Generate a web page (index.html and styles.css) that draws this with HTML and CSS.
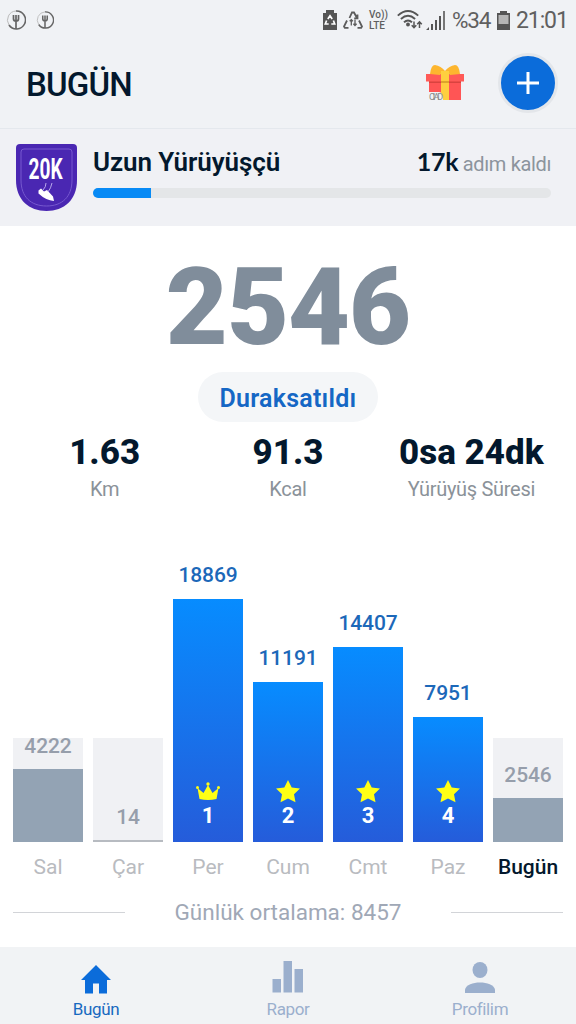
FILE: index.html
```html
<!DOCTYPE html>
<html lang="tr">
<head>
<meta charset="utf-8">
<title>Bugün</title>
<link rel="stylesheet" href="styles.css">
</head>

<body>
<div class="status">
  <div class="status-left">
    <svg width="20" height="20" viewBox="0 0 20 20" fill="none" stroke="#666"><path d="M10 1a9 9 0 1 1-7 14" stroke-width="1.6"/><path d="M3 15A9 9 0 0 1 10 1" stroke="#bbb" stroke-width="1"/><path d="M7.500 5v4q0 2 2.500 2t2.500-2V5M10 5v14" stroke-width="1.700"/></svg>
    <svg width="18" height="18" viewBox="0 0 20 20" fill="none" stroke="#666"><path d="M10 1a9 9 0 1 1-7 14" stroke-width="1.6"/><path d="M3 15A9 9 0 0 1 10 1" stroke="#bbb" stroke-width="1"/><path d="M7.500 5v4q0 2 2.500 2t2.500-2V5M10 5v14" stroke-width="1.700"/></svg>
  </div>
  <div class="status-right">
    <svg class="s-recycle" width="14" height="20" viewBox="0 0 14 20"><path d="M0 3h3V0h8v3h3v17H0z" fill="#555"/><path d="M4.800 9 7 5.800 9.200 9M10.400 10.500l1.300 3.500H8.300M5.700 14H2.300l1.300-3.500" fill="none" stroke="#fff" stroke-width="1.700"/></svg>
    <svg class="s-saver" width="20" height="18" viewBox="0 0 20 18" fill="none" stroke="#5c5c5c" stroke-width="1.800"><path d="M6.500 7 9 1.500h2L14 7M14.500 3.500v3.800h-3.300M16 9.500l3 6-.800 1.300H14.500M4 9.500l-3 6 .800 1.300H5.500"/><path d="M8.300 8.500v6M6.700 10.300 8.300 8.600l1.600 1.700M12 8.500v6m-1.600-1.700 1.600 1.700 1.600-1.700" stroke-width="1.300"/></svg>
    <div class="lte"><span>Vo))</span><span>LTE</span></div>
    <svg class="s-wifi" width="26" height="20" viewBox="0 0 26 20" fill="none" stroke="#555" stroke-width="1.900"><path d="M.8 5.600q10.200-9.200 20.400 0M3.900 9q7.100-6.300 14.200 0M7 12.300q4-3.600 8 0"/><circle cx="11" cy="14.500" r="1" fill="#555"/><path d="M17 11.500v6m-2.300-2.200L17 17.600l2.300-2.300M22.500 18v-6m-2.300 2.200 2.300-2.300 2.300 2.300" stroke-width="1.500"/></svg>
    <svg class="s-signal" width="19" height="19" viewBox="0 0 19 19" fill="#555"><path d="M0 19l3-3v3zM5 13h2v6H5zM9 9h2v10H9zM13 5h2v14h-2z"/><path d="M17 0h2v19h-2z" fill="#777"/></svg>
    <span class="percent">%34</span>
    <svg class="s-battery" width="13" height="19" viewBox="0 0 13 19"><path d="M0 2h3V0h7v2h3v17H0z" fill="#555"/><path d="M1.500 4h10v9h-10z" fill="#b5b5b5"/></svg>
    <span class="clock">21:01</span>
  </div>
</div>

<div class="header">
  <h1>BUGÜN</h1>
  <svg class="gift" width="38" height="38" viewBox="0 0 38 38">
    <path d="M3 17h32v19H3z" fill="#ff5555"/>
    <path d="M0 10h38v7.500H0z" fill="#ff5a57"/>
    <path d="M3 17.500h32v1.500H3z" fill="#d9433f"/>
    <path d="M4 10Q5 1 9 1q6 1 10 6 4-5 10-6 4 0 5 9l-10 1-2-3h-6l-2 3z" fill="#fdb62f"/>
    <path d="M15 7h8v29h-8z" fill="#ffcf3f"/>
    <path d="M15 17h8v2h-8z" fill="#dda52c"/>
    <path d="M1 28h12q4 0 4 9H1z" fill="#f0f2f5"/>
    <text class="gift-text" x="3" y="36">CIAD</text>
  </svg>
  <div class="add"><svg width="24" height="24" viewBox="0 0 24 24"><path d="M12 1v22M1 12h22" stroke="#fff" stroke-width="3"/></svg></div>
</div>

<div class="goal">
  <svg class="badge" width="61" height="68" viewBox="0 0 61 68">
    <path d="M4 0h53q4 0 4 4v32c0 20-13 31-30.500 31S0 56 0 36V4q0-4 4-4z" fill="#4a27b2"/>
    <path d="M8 5h45q3 0 3 3v28c0 17-10 26-25.500 26S5 53 5 36V8q0-3 3-3z" fill="none" stroke="#7658cf"/>
    <g transform="translate(12.500 34.500) scale(.66 1)"><text class="badge-text" x="0" y="0">20K</text></g>
    <path d="M22.500 46.500l2.500-2 3 3 3-1.500 6 6.500 1 4.500q-8-.5-15.500-7.500z" fill="#fff"/>
    <path d="M27 46q3-3 3-7M32 48q3-4 4-9" fill="none" stroke="#b9a9eb"/>
  </svg>
  <div class="goal-body">
    <div class="goal-text">
      <span class="goal-name">Uzun Yürüyüşçü</span>
      <span class="goal-left"><b>17k</b> adım kaldı</span>
    </div>
    <div class="progress"><div class="progress-fill"></div></div>
  </div>
</div>

<div class="today">
  <div class="steps">2546</div>
  <div class="paused"><span>Duraksatıldı</span></div>
  <div class="stats">
    <div class="stat"><b>1.63</b><span>Km</span></div>
    <div class="stat"><b>91.3</b><span>Kcal</span></div>
    <div class="stat time"><b>0sa 24dk</b><span>Yürüyüş Süresi</span></div>
  </div>
</div>

<div class="chart">
  <div class="day low"><div class="track"></div><div class="stack"><span class="value">4222</span><div class="bar" style="height:73px"></div></div><span class="name">Sal</span></div>
  <div class="day low"><div class="track"></div><div class="stack"><span class="value">14</span><div class="bar thin" style="height:2px"></div></div><span class="name">Çar</span></div>
  <div class="day"><div class="stack"><span class="value">18869</span><div class="bar" style="height:243px">
    <svg width="24" height="24" viewBox="0 0 24 24" fill="#ffff14"><path d="M3.500 20 1.500 9l6 5L12 6l4.500 8 6-5-2 11q-8.500 2-17 0z"/><circle cx="1.500" cy="8.500" r="1.500"/><circle cx="12" cy="5" r="1.700"/><circle cx="22.500" cy="8.500" r="1.500"/></svg><b>1</b></div></div><span class="name">Per</span></div>
  <div class="day"><div class="stack"><span class="value">11191</span><div class="bar" style="height:160px">
    <svg width="24" height="24" viewBox="0 0 24 24" fill="#ffff14"><path d="M12 1l3.700 7.400 8.300 1.100-6 5.700 1.500 8L12 19.500l-7.500 3.700 1.500-8-6-5.700 8.300-1.100z"/></svg><b>2</b></div></div><span class="name">Cum</span></div>
  <div class="day"><div class="stack"><span class="value">14407</span><div class="bar" style="height:195px">
    <svg width="24" height="24" viewBox="0 0 24 24" fill="#ffff14"><path d="M12 1l3.700 7.400 8.300 1.100-6 5.700 1.500 8L12 19.500l-7.500 3.700 1.500-8-6-5.700 8.300-1.100z"/></svg><b>3</b></div></div><span class="name">Cmt</span></div>
  <div class="day"><div class="stack"><span class="value">7951</span><div class="bar" style="height:125px">
    <svg width="24" height="24" viewBox="0 0 24 24" fill="#ffff14"><path d="M12 1l3.700 7.400 8.300 1.100-6 5.700 1.500 8L12 19.500l-7.500 3.700 1.500-8-6-5.700 8.300-1.100z"/></svg><b>4</b></div></div><span class="name">Paz</span></div>
  <div class="day low current"><div class="track"></div><div class="stack"><span class="value">2546</span><div class="bar" style="height:44px"></div></div><span class="name">Bugün</span></div>
</div>

<div class="average"><span>Günlük ortalama: 8457</span></div>

<div class="nav">
  <div class="tab active">
    <svg width="36" height="36" viewBox="0 0 36 36"><path d="M18 4 33 19h-4v13.500h-8V22.500h-6v10H7V19H3z"/></svg>
    <span>Bugün</span>
  </div>
  <div class="tab">
    <svg width="36" height="36" viewBox="0 0 36 36"><path d="M2.500 18H11v13.500H2.500zM13.500 0H22v31.500h-8.500zM24.500 8H33v23.500h-8.500z"/></svg>
    <span>Rapor</span>
  </div>
  <div class="tab">
    <svg width="36" height="36" viewBox="0 0 36 36"><ellipse cx="18" cy="9" rx="7.500" ry="8"/><path d="M3 32v-3.500c2-9.500 28-9.500 30 0V32z"/></svg>
    <span>Profilim</span>
  </div>
</div>
</body>
</html>
```

FILE: styles.css
```css
* { box-sizing: border-box; }

body {
  margin: 0;
  width: 576px;
  height: 1024px;
  overflow: hidden;
  display: flex;
  flex-direction: column;
  background: #fff;
  color: #03182d;
  font-family: Roboto, "Liberation Sans", sans-serif;
}
svg { display: block; flex: none; }

.status {
  height: 40px;
  padding: 0 8px 0 6px;
  background: #f0f2f5;
  display: flex;
  align-items: center;
  justify-content: space-between;
  color: #606060;
}
.status-left { display: flex; align-items: center; gap: 10px; }
.status-right { display: flex; align-items: center; }
.s-recycle { margin-right: 6px; }
.s-saver { margin-right: 6px; }
.lte { width: 21px; font-size: 10px; line-height: 11px; font-weight: 500; margin-right: 7px; }
.lte span { display: block; }
.s-wifi { margin-right: 3px; }
.s-signal { margin-right: 7px; }
.percent { width: 39px; font-size: 22.5px; line-height: 24px; letter-spacing: -1.2px; margin-right: 6px; }
.s-battery { margin-right: 6px; }
.clock { width: 52px; font-size: 23px; line-height: 24px; letter-spacing: -1.1px; padding-top: 1px; }

.header {
  height: 89px;
  padding: 0 18px 0 26px;
  background: #f0f2f5;
  border-bottom: 1px solid #e4e8ed;
  display: flex;
  align-items: center;
}
.header h1 { margin: 0; flex: 1; font-size: 33px; font-weight: 500; letter-spacing: -.8px; }
.gift { margin: 0 34px 2px 0; }
.gift-text { font-size: 9px; letter-spacing: -2px; fill: #888; }
.add {
  width: 60px;
  height: 60px;
  margin-bottom: 2px;
  border: 3px solid #e3e6ea;
  border-radius: 50%;
  background: #0b6cda;
  display: flex;
  align-items: center;
  justify-content: center;
}

.goal { height: 97px; background: #f0f1f5; padding: 15px 25px 0 16px; display: flex; }
.badge { margin-right: 16px; overflow: visible; }
.badge-text { fill: #fff; font-size: 29px; font-weight: 700; }
.goal-body { flex: 1; }
.goal-text { height: 44px; padding-top: 1px; display: flex; justify-content: space-between; align-items: baseline; }
.goal-name { font-size: 26px; line-height: 34px; font-weight: 600; letter-spacing: -.1px; }
.goal-left { font-size: 20px; letter-spacing: -.35px; color: #8c949d; }
.goal-left b { font-family: Lato, sans-serif; font-size: 25px; color: #03182d; }
.progress { height: 10px; border-radius: 5px; background: #e4e6e8; overflow: hidden; }
.progress-fill { width: 58px; height: 10px; background: #078af5; }

.today { height: 327px; display: flex; flex-direction: column; align-items: center; }
.steps { margin-top: 17px; height: 129px; font-size: 107px; line-height: 129px; font-weight: 900; letter-spacing: -.9px; color: #808d9b; }
.paused {
  width: 180px;
  height: 50px;
  border-radius: 25px;
  background: #f4f6f8;
  color: #1567c5;
  font-size: 25px;
  font-weight: 600;
  letter-spacing: .25px;
  line-height: 54px;
  text-align: center;
}
.stats { align-self: stretch; padding: 9px 13px; display: flex; justify-content: space-between; }
.stat { width: 184px; display: flex; flex-direction: column; align-items: center; }
.stat b { font-size: 35px; line-height: 44px; font-weight: 800; white-space: nowrap; }
.stat span { font-size: 20px; line-height: 28px; letter-spacing: -.3px; color: #8b9299; }

.chart { height: 333px; padding: 0 13px; display: flex; gap: 10px; }
.day { width: 70px; display: grid; grid-template-rows: 289px 44px; }
.track, .stack { grid-row: 1; grid-column: 1; align-self: end; }
.track { height: 104px; background: #f0f1f4; }
.stack { display: flex; flex-direction: column; align-items: center; }
.value { font-size: 21px; line-height: 24px; margin-bottom: 12px; font-weight: 500; color: #1c68b9; letter-spacing: -.1px; }
.low .value { margin-bottom: 11px; color: #969eab; }
.bar {
  width: 70px;
  background: linear-gradient(#078cff, #255cda);
  display: flex;
  flex-direction: column;
  align-items: center;
  justify-content: flex-end;
  color: #fff;
}
.bar b { font-size: 22px; line-height: 26px; margin-bottom: 13px; font-weight: 700; }
.low .bar { background: #93a3b4; }
.low .thin { background: #b7bbc1; }
.name { grid-row: 2; text-align: center; font-size: 21px; line-height: 51px; color: #b9bbc0; }
.current .name { color: #03182d; font-weight: 500; }

.average {
  height: 61px;
  padding: 12px 13px 0;
  display: flex;
  align-items: flex-start;
  gap: 50px;
  color: #a0a8b6;
  font-size: 22.5px;
  line-height: 28px;
  white-space: nowrap;
}
.average:before, .average:after { content: ""; flex: 1; height: 1px; margin-top: 14px; background: #d2d4d8; }

.nav { height: 77px; background: #f1f3f5; display: flex; }
.tab { width: 192px; padding-top: 14px; display: flex; flex-direction: column; align-items: center; color: #9bafcd; fill: #9bafcd; font-size: 17px; line-height: 24px; letter-spacing: -.35px; }
.active { color: #1769c0; fill: #0b6cda; }
```
